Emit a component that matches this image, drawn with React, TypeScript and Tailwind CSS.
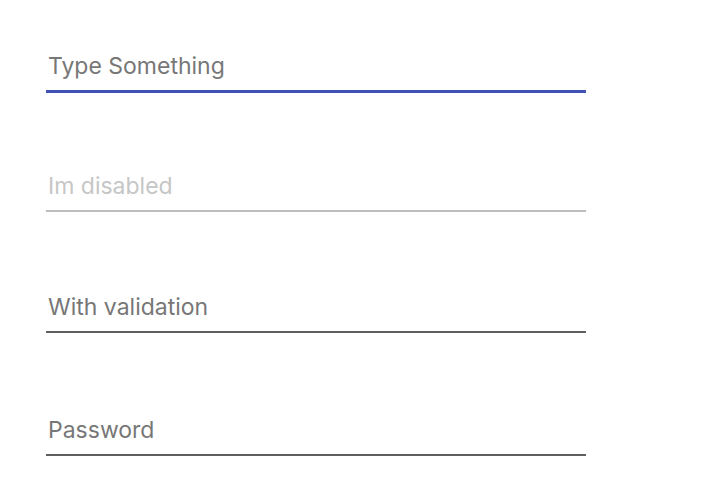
// App.tsx — simple underlined text fields
export default function App() {
  const base =
    "block w-full bg-transparent outline-none px-[2px] pb-[10px] text-[23px] leading-[28px] placeholder:text-[#777777]";

  return (
    <div className="min-h-[496px] bg-white pt-[52px] pl-[46px]" style={{ fontFamily: '"Inter", "Liberation Sans", sans-serif' }}>
      <div className="flex w-[540px] flex-col">
        {/* Focused field */}
        <input className={`${base} border-b-[3px] border-[#3f51b5]`} placeholder="Type Something" />

        {/* Disabled field */}
        <input
          className={`${base} mt-[79px] border-b-2 border-[#bdbdbd] placeholder:text-[#c6c6c6]`}
          placeholder="Im disabled"
          disabled
        />

        {/* Validation field */}
        <input className={`${base} mt-[81px] border-b-2 border-[#5f5f5f]`} placeholder="With validation" />

        {/* Password field */}
        <input className={`${base} mt-[83px] border-b-2 border-[#5f5f5f]`} placeholder="Password" type="password" />
      </div>
    </div>
  );
}
